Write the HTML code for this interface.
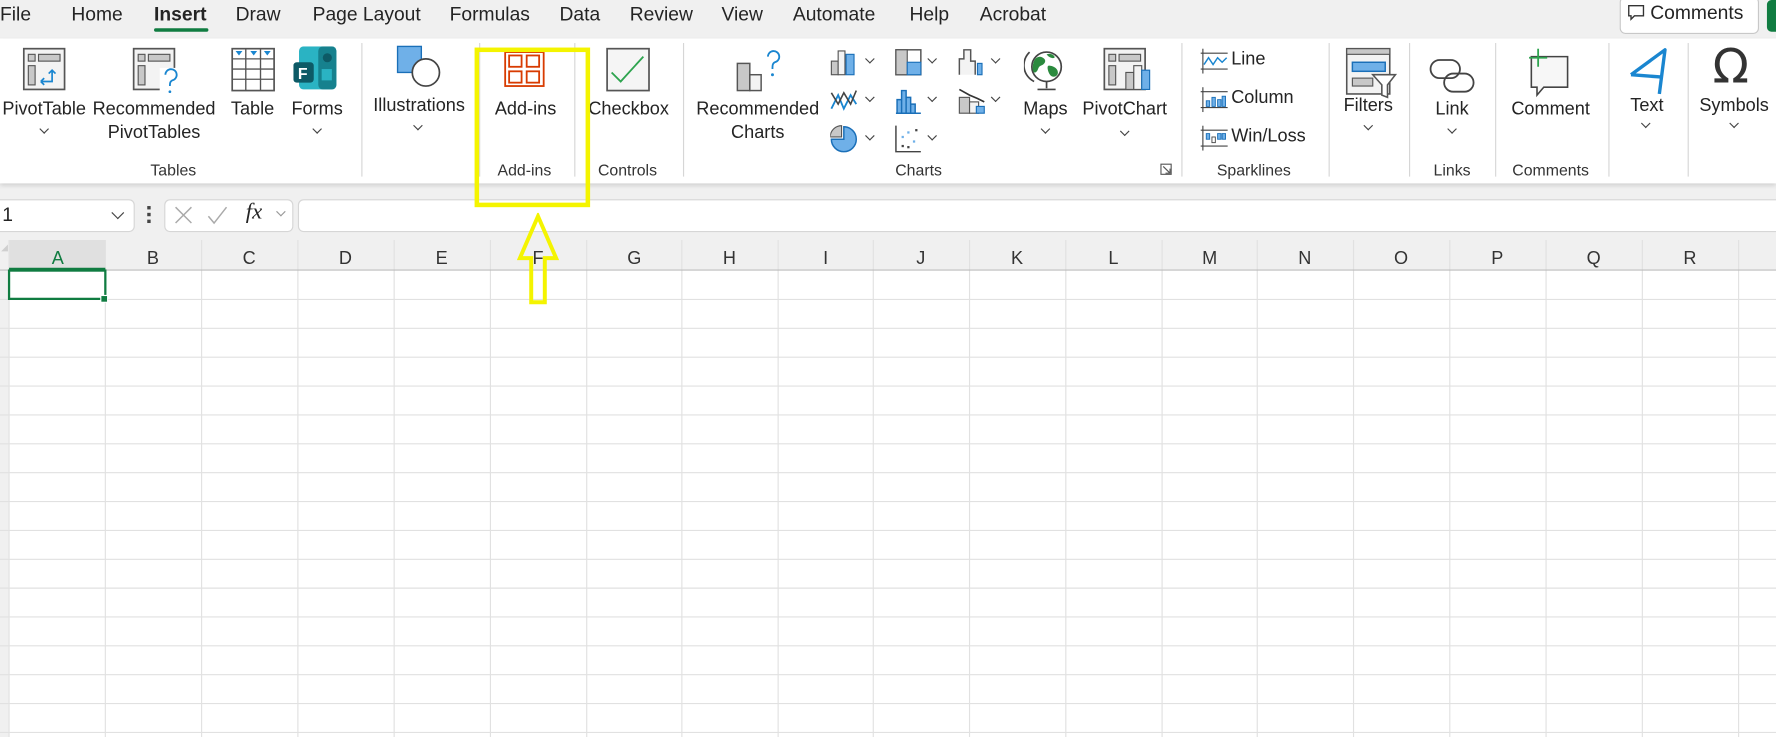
<!DOCTYPE html>
<html><head><meta charset="utf-8"><style>
html,body{margin:0;padding:0;width:1776px;height:737px;overflow:hidden;background:#fff}
#w{position:absolute;left:0;top:0;width:1568px;height:651px;transform:scale(1.13265,1.1321);transform-origin:0 0;font-family:"Liberation Sans",sans-serif;color:#242424;background:#f0f0f0}
.a{position:absolute}
.t{position:absolute;top:3px;font-size:17px;white-space:nowrap}
.l{position:absolute;font-size:16px;white-space:nowrap;transform:translateX(-50%);text-align:center;line-height:21px}
.g{position:absolute;top:142px;font-size:14px;transform:translateX(-50%);white-space:nowrap;color:#333}
.sep{position:absolute;top:38px;width:1px;height:118px;background:#d6d6d6}
.ch{position:absolute;width:5px;height:5px;border-right:1.3px solid #444;border-bottom:1.3px solid #444;transform:translateX(-50%) rotate(45deg)}
.sl{position:absolute;font-size:16px;white-space:nowrap}
</style></head><body><div id="w">
<div class="t" style="left:0">File</div>
<div class="t" style="left:63px">Home</div>
<div class="t" style="left:136px;font-weight:bold">Insert</div>
<div class="a" style="left:136px;top:25px;width:48px;height:3px;background:#107c41;border-radius:2px"></div>
<div class="t" style="left:208px">Draw</div>
<div class="t" style="left:276px">Page Layout</div>
<div class="t" style="left:397px">Formulas</div>
<div class="t" style="left:494px">Data</div>
<div class="t" style="left:556px">Review</div>
<div class="t" style="left:637px">View</div>
<div class="t" style="left:700px">Automate</div>
<div class="t" style="left:803px">Help</div>
<div class="t" style="left:865px">Acrobat</div>
<div class="a" style="left:1430px;top:-3px;width:121px;height:31px;border:1px solid #c8c8c8;border-radius:5px;background:#fff"></div>
<svg class="a" style="left:1437px;top:4px" width="16" height="15"><path d="M1 1h13v9H6l-3 3v-3H1z" fill="none" stroke="#333" stroke-width="1.2"/></svg>
<div class="t" style="left:1457px;top:2px">Comments</div>
<div class="a" style="left:1560px;top:0;width:8px;height:28px;background:#107c41;border-radius:4px 0 0 4px"></div>
<div class="a" style="left:0;top:34px;width:1568px;height:128px;background:#fff;box-shadow:0 2px 4px rgba(0,0,0,.15)"></div>
<svg class="a" style="left:20px;top:42px" width="40" height="40"><rect x="1" y="1" width="36" height="36" fill="#f3f3f3" stroke="#555" stroke-width="1.5"/><rect x="5" y="6" width="6" height="6" fill="#c8c8c8" stroke="#555"/><rect x="14" y="6" width="19" height="6" fill="#c8c8c8" stroke="#555"/><rect x="5" y="16" width="6" height="17" fill="#c8c8c8" stroke="#555"/><path d="M16 30h10v-10m-3 3 3-3 3 3M16 30l3-3m-3 3 3 3" fill="none" stroke="#1a86d0" stroke-width="1.5"/></svg>
<div class="l" style="left:39px;top:86px">PivotTable</div><div class="ch" style="left:39px;top:111px"></div>
<svg class="a" style="left:117px;top:42px" width="44" height="42"><rect x="1" y="1" width="36" height="36" fill="#f3f3f3" stroke="#555" stroke-width="1.5"/><rect x="5" y="6" width="6" height="6" fill="#c8c8c8" stroke="#555"/><rect x="14" y="6" width="19" height="6" fill="#c8c8c8" stroke="#555"/><rect x="5" y="16" width="6" height="17" fill="#c8c8c8" stroke="#555"/><rect x="24" y="18" width="16" height="22" fill="#fff"/><path d="M29 24a5 5 0 1 1 6 5c-2 1-2 3-2 5" fill="none" stroke="#1a86d0" stroke-width="1.6"/><circle cx="33" cy="39" r="1.2" fill="#1a86d0"/></svg>
<div class="l" style="left:136px;top:86px">Recommended<br>PivotTables</div>
<svg class="a" style="left:204px;top:42px" width="40" height="40"><rect x="1" y="1" width="37" height="37" fill="#fff" stroke="#555" stroke-width="1.5"/><path d="M1 10h37M1 19h37M1 28h37M13 1v37M26 1v37" stroke="#555" stroke-width="1.2"/><path d="M4 3h6l-3 4zM17 3h6l-3 4zM29 3h6l-3 4z" fill="#1a86d0"/></svg>
<div class="l" style="left:223px;top:86px">Table</div>
<svg class="a" style="left:259px;top:41px" width="40" height="40"><rect x="5" y="0" width="33" height="38" rx="4" fill="#2ab3c3"/><rect x="22" y="0" width="16" height="38" rx="4" fill="#16818e"/><circle cx="30" cy="10" r="4" fill="#0d5a66"/><rect x="25" y="20" width="9" height="10" fill="#2ab3c3"/><rect x="0" y="14" width="18" height="18" rx="3" fill="#0d5a66"/><text x="4" y="29" font-size="14" font-weight="bold" fill="#fff" font-family="Liberation Sans">F</text></svg>
<div class="l" style="left:280px;top:86px">Forms</div><div class="ch" style="left:280px;top:111px"></div>
<div class="g" style="left:153px">Tables</div>
<div class="sep" style="left:319px"></div>
<svg class="a" style="left:350px;top:40px" width="40" height="40"><rect x="1" y="1" width="21" height="23" fill="#6fb0e8" stroke="#1a6fb8" stroke-width="1.2"/><circle cx="26" cy="24" r="12" fill="#fff" stroke="#444" stroke-width="1.5"/></svg>
<div class="l" style="left:370px;top:83px">Illustrations</div><div class="ch" style="left:369px;top:108px"></div>
<div class="sep" style="left:423px"></div>
<svg class="a" style="left:445px;top:45px" width="38" height="34"><g fill="none" stroke="#d83b01" stroke-width="1.6"><rect x="1" y="1" width="34" height="30"/><rect x="4.5" y="4" width="11" height="10"/><rect x="20" y="4" width="11" height="10"/><rect x="4.5" y="18" width="11" height="10"/><rect x="20" y="18" width="11" height="10"/></g></svg>
<div class="l" style="left:464px;top:86px">Add-ins</div>
<div class="g" style="left:463px">Add-ins</div>
<div class="sep" style="left:507px"></div>
<svg class="a" style="left:535px;top:42px" width="40" height="40"><rect x="1" y="1" width="37" height="37" fill="#f5f5f5" stroke="#555" stroke-width="1.5"/><path d="M5 22l8 8 20-22" fill="none" stroke="#2ea44f" stroke-width="1.6"/></svg>
<div class="l" style="left:555px;top:86px">Checkbox</div>
<div class="g" style="left:554px">Controls</div>
<div class="sep" style="left:603px"></div>
<svg class="a" style="left:649px;top:42px" width="46" height="42"><rect x="2" y="14" width="11" height="24" fill="#c8c8c8" stroke="#555" stroke-width="1.3"/><rect x="13" y="24" width="10" height="14" fill="#f3f3f3" stroke="#555" stroke-width="1.3"/><path d="M29 8a5 5 0 1 1 6 5c-2 1-2 3-2 6" fill="none" stroke="#1a86d0" stroke-width="1.6"/><circle cx="33" cy="24" r="1.3" fill="#1a86d0"/></svg>
<div class="l" style="left:669px;top:86px">Recommended<br>Charts</div>
<svg class="a" style="left:733px;top:42px" width="26" height="26"><rect x="1" y="12" width="6" height="12" fill="#c8c8c8" stroke="#555"/><rect x="7" y="3" width="6" height="21" fill="#f3f3f3" stroke="#555"/><rect x="14" y="6" width="7" height="18" fill="#6fb0e8" stroke="#1a6fb8"/></svg><div class="ch" style="left:768px;top:49px"></div>
<svg class="a" style="left:733px;top:76px" width="26" height="26"><path d="M1 20l6-12 5 12 6-12 5 8" fill="none" stroke="#1a86d0" stroke-width="1.6"/><path d="M1 6l6 10 5-10 6 10 5-12" fill="none" stroke="#444" stroke-width="1.4"/></svg><div class="ch" style="left:768px;top:83px"></div>
<svg class="a" style="left:733px;top:110px" width="26" height="26"><path d="M12 13V2a11 11 0 1 1-11 11z" fill="#6fb0e8" stroke="#1a6fb8" stroke-width="1.3"/><path d="M10 11V1A10 10 0 0 0 0 11z" fill="#c8c8c8" stroke="#555"/></svg><div class="ch" style="left:768px;top:117px"></div>
<svg class="a" style="left:790px;top:42px" width="26" height="26"><rect x="1" y="2" width="22" height="22" fill="#fff" stroke="#555" stroke-width="1.3"/><rect x="1" y="2" width="10" height="22" fill="#c8c8c8" stroke="#555"/><rect x="11" y="13" width="12" height="11" fill="#6fb0e8" stroke="#1a6fb8"/></svg><div class="ch" style="left:823px;top:49px"></div>
<svg class="a" style="left:790px;top:76px" width="26" height="26"><path d="M1 24h22M2 24V12h4v12M6 24V4h4v20M10 24V10h4v14M14 24V16h4v8" fill="#6fb0e8" stroke="#1a6fb8" stroke-width="1.3"/></svg><div class="ch" style="left:823px;top:83px"></div>
<svg class="a" style="left:790px;top:110px" width="26" height="26"><path d="M1 1v23h22" fill="none" stroke="#444" stroke-width="1.3"/><g fill="#6fb0e8"><rect x="6" y="10" width="2" height="2"/><rect x="11" y="6" width="2" height="2"/><rect x="16" y="14" width="2" height="2"/></g><g fill="#444"><rect x="6" y="18" width="2" height="2"/><rect x="18" y="4" width="2" height="2"/><rect x="11" y="19" width="2" height="2"/></g></svg><div class="ch" style="left:823px;top:117px"></div>
<svg class="a" style="left:846px;top:42px" width="26" height="26"><path d="M1 24V10h4V2h6v10h4v12" fill="#f3f3f3" stroke="#555" stroke-width="1.3"/><rect x="17" y="14" width="4" height="10" fill="#6fb0e8" stroke="#1a6fb8"/></svg><div class="ch" style="left:879px;top:49px"></div>
<svg class="a" style="left:846px;top:76px" width="26" height="26"><rect x="1" y="10" width="9" height="14" fill="#c8c8c8" stroke="#555"/><rect x="10" y="14" width="8" height="10" fill="#f3f3f3" stroke="#555"/><rect x="16" y="18" width="7" height="6" fill="#6fb0e8" stroke="#1a6fb8"/><path d="M1 3l9 5 7 3 6 3" fill="none" stroke="#333" stroke-width="1.5"/></svg><div class="ch" style="left:879px;top:83px"></div>
<svg class="a" style="left:904px;top:40px" width="40" height="42"><path d="M5 6a16 16 0 0 0 4 26" fill="none" stroke="#444" stroke-width="1.5"/><circle cx="20" cy="19" r="13" fill="#fff" stroke="#444" stroke-width="1.5"/><path d="M10 12c3-3 6-2 8 0s0 5-3 6-2 5-5 6-3-8 0-12zM22 18c3 0 8 2 8 6s-5 5-7 2-3-8-1-8zM20 8c3-1 6 0 7 2s-4 2-7-2z" fill="#2b8a3e"/><path d="M20 32v6M12 39h16" stroke="#444" stroke-width="1.5"/></svg>
<div class="l" style="left:923px;top:86px">Maps</div><div class="ch" style="left:923px;top:111px"></div>
<svg class="a" style="left:974px;top:42px" width="44" height="42"><rect x="1" y="1" width="36" height="36" fill="#f3f3f3" stroke="#555" stroke-width="1.5"/><rect x="5" y="6" width="6" height="6" fill="#c8c8c8" stroke="#555"/><rect x="14" y="6" width="19" height="6" fill="#c8c8c8" stroke="#555"/><rect x="5" y="16" width="6" height="17" fill="#c8c8c8" stroke="#555"/><rect x="20" y="22" width="7" height="15" fill="#c8c8c8" stroke="#555"/><rect x="27" y="16" width="7" height="21" fill="#f3f3f3" stroke="#555"/><rect x="34" y="20" width="7" height="17" fill="#6fb0e8" stroke="#1a6fb8"/></svg>
<div class="l" style="left:993px;top:86px">PivotChart</div><div class="ch" style="left:993px;top:113px"></div>
<div class="g" style="left:811px">Charts</div>
<svg class="a" style="left:1024px;top:144px" width="11" height="11"><path d="M1 1h9v9H1z" fill="none" stroke="#555"/><path d="M3 3l6 6M9 5v4H5" fill="none" stroke="#555"/></svg>
<div class="sep" style="left:1043px"></div>
<svg class="a" style="left:1060px;top:43px" width="24" height="22"><path d="M2 0v22M0 18h24M0 4h24" stroke="#444"/><path d="M3 14l4-6 4 6 4-6 4 4 4-4" fill="none" stroke="#1a86d0" stroke-width="1.3"/></svg><div class="sl" style="left:1087px;top:44px">Line</div>
<svg class="a" style="left:1060px;top:77px" width="24" height="22"><path d="M2 0v22M0 18h24M0 4h24" stroke="#444"/><g fill="#6fb0e8" stroke="#1a6fb8" stroke-width=".8"><rect x="5" y="12" width="3" height="5"/><rect x="10" y="9" width="3" height="8"/><rect x="15" y="11" width="3" height="6"/><rect x="19" y="8" width="3" height="9"/></g></svg><div class="sl" style="left:1087px;top:78px">Column</div>
<svg class="a" style="left:1060px;top:111px" width="24" height="22"><path d="M2 0v22M0 18h24M0 4h24" stroke="#444"/><g fill="#6fb0e8" stroke="#1a6fb8" stroke-width=".8"><rect x="5" y="7" width="3" height="5"/><rect x="15" y="7" width="3" height="5"/><rect x="19" y="7" width="3" height="5"/></g><rect x="10" y="10" width="3" height="5" fill="#fff" stroke="#444" stroke-width=".8"/></svg><div class="sl" style="left:1087px;top:112px">Win/Loss</div>
<div class="g" style="left:1107px">Sparklines</div>
<div class="sep" style="left:1173px"></div>
<svg class="a" style="left:1188px;top:42px" width="46" height="46"><rect x="1" y="1" width="38" height="40" fill="#f3f3f3" stroke="#555" stroke-width="1.4"/><rect x="1" y="1" width="38" height="5" fill="#c8c8c8" stroke="#555"/><rect x="6" y="13" width="29" height="8" fill="#6fb0e8" stroke="#1a6fb8" stroke-width="1.3"/><rect x="6" y="27" width="18" height="7" fill="#c8c8c8" stroke="#555"/><path d="M24 24h20l-7 9v11l-5-2v-9z" fill="#fff" stroke="#555" stroke-width="1.4"/></svg>
<div class="l" style="left:1208px;top:83px">Filters</div><div class="ch" style="left:1208px;top:108px"></div>
<div class="sep" style="left:1244px"></div>
<svg class="a" style="left:1262px;top:52px" width="42" height="32"><rect x="1" y="1" width="26" height="16" rx="8" fill="none" stroke="#444" stroke-width="1.6"/><rect x="13" y="13" width="26" height="16" rx="8" fill="none" stroke="#444" stroke-width="1.6"/></svg>
<div class="l" style="left:1282px;top:86px">Link</div><div class="ch" style="left:1282px;top:111px"></div>
<div class="g" style="left:1282px">Links</div>
<div class="sep" style="left:1320px"></div>
<svg class="a" style="left:1346px;top:43px" width="46" height="46"><path d="M6 7h32v27H17l-6 7v-7H6z" fill="#f7f7f7" stroke="#444" stroke-width="1.4"/><path d="M12 0v16M4 8h16" stroke="#2ea44f" stroke-width="1.6"/></svg>
<div class="l" style="left:1369px;top:86px">Comment</div>
<div class="g" style="left:1369px">Comments</div>
<div class="sep" style="left:1420px"></div>
<svg class="a" style="left:1438px;top:42px" width="34" height="44"><path d="M2 24 32 2 27 41" fill="none" stroke="#1a86d0" stroke-width="3" stroke-linejoin="round"/><path d="M2 24 28 26" fill="none" stroke="#1a86d0" stroke-width="3"/></svg>
<div class="l" style="left:1454px;top:83px">Text</div><div class="ch" style="left:1453px;top:106px"></div>
<div class="sep" style="left:1490px"></div>
<div class="a" style="left:1512px;top:34px;font-size:42px;color:#333;font-family:'DejaVu Sans',sans-serif">Ω</div>
<div class="l" style="left:1531px;top:83px">Symbols</div><div class="ch" style="left:1531px;top:106px"></div>
<div class="a" style="left:-6px;top:176px;width:123px;height:27px;background:#fff;border:1px solid #d6d6d6;border-radius:5px"></div>
<div class="a" style="left:2px;top:180px;font-size:17px">1</div>
<div class="ch" style="left:104px;top:184px;width:7px;height:7px"></div>
<div class="a" style="left:130px;top:182px;width:3px;height:3px;background:#444;box-shadow:0 6px 0 #444,0 12px 0 #444"></div>
<div class="a" style="left:145px;top:176px;width:112px;height:27px;background:#fff;border:1px solid #d6d6d6;border-radius:5px"></div>
<svg class="a" style="left:153px;top:181px" width="90" height="18"><path d="M2 2l14 14M16 2 2 16" stroke="#aaa" stroke-width="1.3"/><path d="M31 10l5 6 11-14" fill="none" stroke="#aaa" stroke-width="1.3"/></svg>
<div class="a" style="left:217px;top:176px;font-size:20px;font-style:italic;font-family:'Liberation Serif',serif">fx</div>
<div class="ch" style="left:248px;top:184px;border-color:#999"></div>
<div class="a" style="left:263px;top:176px;width:1310px;height:27px;background:#fff;border:1px solid #d6d6d6;border-radius:5px"></div>
<div class="a" style="left:0;top:212px;width:1568px;height:439px;background:#fff"></div>
<svg class="a" style="left:0;top:212px" width="1568" height="439" font-family="Liberation Sans" font-size="16">
<rect x="0" y="0" width="1568" height="26" fill="#f0f0f0"/>
<rect x="0" y="26" width="8" height="413" fill="#f0f0f0"/>
<rect x="8" y="0" width="85" height="26" fill="#e0e0e0"/>
<path d="M1 10l6-6v6z" fill="#cfcfcf"/>
<g stroke="#e1e1e1" stroke-width="1">
<path d="M93 0V439M178 0V439M263 0V439M348 0V439M433 0V439M518 0V439M602 0V439M687 0V439M771 0V439M856 0V439M941 0V439M1026 0V439M1110 0V439M1195 0V439M1280 0V439M1365 0V439M1450 0V439M1535 0V439M8 0V439"/>
<path d="M0 52.5H1568M0 78H1568M0 103.5H1568M0 129H1568M0 154.5H1568M0 180H1568M0 205.5H1568M0 231H1568M0 256.5H1568M0 282H1568M0 307.5H1568M0 333H1568M0 358.5H1568M0 384H1568M0 409.5H1568M0 435H1568"/>
</g>
<path d="M0 26.5H1568" stroke="#bdbdbd"/>
<path d="M8 25.5H93" stroke="#107c41" stroke-width="2"/>
<g text-anchor="middle" fill="#333">
<text x="51" y="21" fill="#107c41">A</text><text x="135" y="21">B</text><text x="220" y="21">C</text><text x="305" y="21">D</text><text x="390" y="21">E</text><text x="475" y="21">F</text><text x="560" y="21">G</text><text x="644" y="21">H</text><text x="729" y="21">I</text><text x="813" y="21">J</text><text x="898" y="21">K</text><text x="983" y="21">L</text><text x="1068" y="21">M</text><text x="1152" y="21">N</text><text x="1237" y="21">O</text><text x="1322" y="21">P</text><text x="1407" y="21">Q</text><text x="1492" y="21">R</text>
</g>
<rect x="8" y="27" width="85" height="25" fill="none" stroke="#107c41" stroke-width="2"/>
<rect x="89" y="49" width="6" height="6" fill="#107c41" stroke="#fff"/>
</svg>
<div class="a" style="left:419px;top:42px;width:94px;height:133px;border:4px solid #f4f400"></div>
<svg class="a" style="left:455px;top:188px" width="40" height="82"><path d="M20 3 36 40h-10v39H14V40H4z" fill="none" stroke="#f4f400" stroke-width="3.5" stroke-linejoin="miter"/></svg>
</div></body></html>
